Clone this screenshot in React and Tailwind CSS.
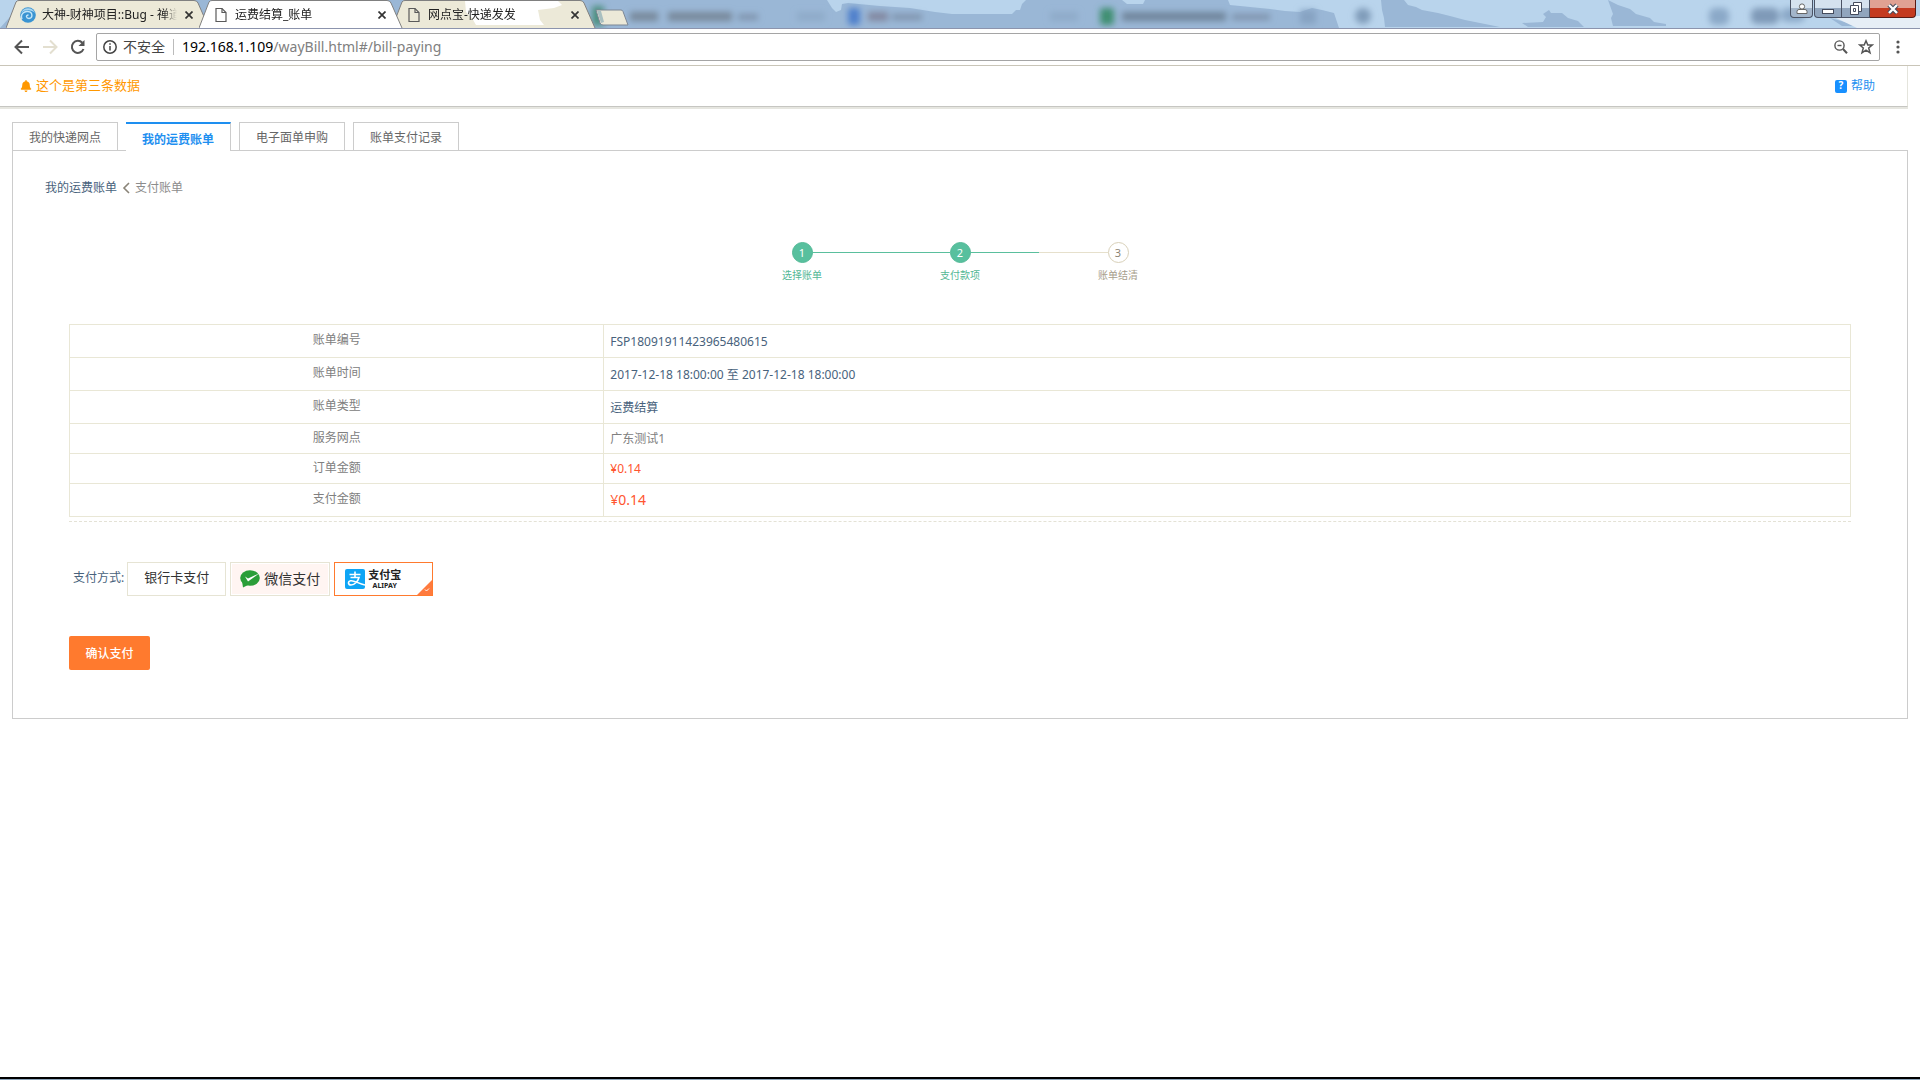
import { Fragment } from 'react'
import { FaBell } from 'react-icons/fa'

const browserTabs = [
    { title: '大神-财神项目::Bug - 禅道', icon: 'globe', active: false },
    { title: '运费结算_账单', icon: 'file', active: true },
    { title: '网点宝-快递发发', icon: 'file', active: false, glare: true },
]

const pageTabs = ['我的快递网点', '我的运费账单', '电子面单申购', '账单支付记录']

const steps = [
    { label: '选择账单', done: true },
    { label: '支付款项', done: true },
    { label: '账单结清', done: false },
]

const rows = [
    { label: '账单编号', value: 'FSP18091911423965480615', tone: 'text-[#48627c] pt-0.5', height: 'h-[33px]' },
    { label: '账单时间', value: '2017-12-18 18:00:00 至 2017-12-18 18:00:00', tone: 'text-[#48627c] pt-0.5', height: 'h-[33px]' },
    { label: '账单类型', value: '运费结算', tone: 'text-[#48627c] pt-0.5', height: 'h-[33px]' },
    { label: '服务网点', value: '广东测试1', tone: 'text-[#808080]', height: 'h-[30px]' },
    { label: '订单金额', value: '¥0.14', tone: 'text-[#ff5530]', height: 'h-[30px]' },
    { label: '支付金额', value: '¥0.14', tone: 'text-[#ff5530] text-sm', height: 'h-[33px]' },
]

function TabIcon({ type }) {
    if (type === 'globe') {
        return (
            <svg width="16" height="16" viewBox="0 0 16 16" className="shrink-0">
                <circle cx="8" cy="8" r="7.8" fill="#3a94d2" />
                <path d="M1 6A7.5 7.5 0 0 1 15 6C12 3 5 2 1 6Z" fill="#a9d6f0" />
                <path d="M2 12C0 7 4 4 8 4.5C13 5 13 11 9 11.5C6 11.5 5.5 8 8.5 8" fill="none" stroke="#c4e6f8" strokeWidth="1.4" />
            </svg>
        )
    }
    return (
        <svg width="16" height="16" viewBox="0 0 16 16" className="shrink-0" fill="none" stroke="#5a5a5a" strokeWidth="1.2">
            <path d="M3 1.5H9L13 5.5V14.5H3Z" />
            <path d="M9 1.5V5.5H13" />
        </svg>
    )
}

function Backdrop() {
    return (
        <svg className="absolute inset-0 h-full w-full" viewBox="0 0 1920 28" preserveAspectRatio="none">
            <defs>
                <filter id="soft" x="-20%" y="-50%" width="140%" height="200%">
                    <feGaussianBlur stdDeviation="3" />
                </filter>
            </defs>
            <rect width="1920" height="28" fill="#b9d4ec" />
            <path d="M18 0H827L832 8L836 12L841 10L842 4L848 3L880 6L910 8L935 12L952 14H1012L1016 10H1020L1022 4L1026 0H1122L1127 4H1143L1145 0H1228L1230 5L1250 7L1270 9L1285 11L1300 12L1312 8L1322 10L1334 13L1339 28H0L18 8Z" fill="#9ab7d6" />
            <path d="M1381 0H1404L1408 5L1416 7L1422 10L1438 13L1450 16L1465 20L1480 23L1500 27H1385L1384 18L1382 10Z" fill="#9ab7d6" />
            <path d="M1522 23L1543 22L1546 17L1543 14L1549 10L1551 13L1562 13L1568 18L1578 21L1584 27H1528Z" fill="#9ab7d6" />
            <path d="M1608 0L1618 5L1630 9L1636 14L1650 18L1654 22L1666 24V26H1613L1611 18L1613 14Z" fill="#9ab7d6" />
            <path d="M1830 18L1845 22L1856 26H1842Z" fill="#9ab7d6" />
            <path d="M1857 28L1836 18L1920 16V28Z" fill="#e6eef6" />
            <g filter="url(#soft)">
                <rect x="592" y="6" width="12" height="20" fill="#4d9080" />
                <rect x="630" y="12" width="28" height="9" fill="#78899b" />
                <rect x="668" y="12" width="64" height="9" fill="#78899b" />
                <rect x="738" y="14" width="20" height="6" fill="#7e93ac" />
                <rect x="848" y="8" width="12" height="17" rx="3" fill="#4f80cc" />
                <rect x="868" y="12" width="20" height="9" fill="#8288a0" />
                <rect x="892" y="14" width="30" height="6" fill="#7e93ac" />
                <rect x="1100" y="8" width="14" height="17" rx="3" fill="#3f8f72" />
                <rect x="1122" y="12" width="104" height="9" fill="#71869c" />
                <rect x="1232" y="14" width="38" height="6" fill="#7e93ac" />
                <rect x="797" y="12" width="28" height="9" fill="#8fabc9" />
                <rect x="1050" y="12" width="28" height="9" fill="#8fabc9" />
                <rect x="1300" y="10" width="16" height="14" fill="#86a3c2" />
                <circle cx="1363" cy="16" r="8" fill="#809cba" />
                <rect x="1709" y="8" width="20" height="17" rx="6" fill="#8ba9c8" />
                <rect x="1751" y="8" width="28" height="16" rx="6" fill="#7f9ab8" />
                <rect x="1781" y="8" width="24" height="14" rx="6" fill="#8ba9c8" />
            </g>
        </svg>
    )
}

function BrowserTab({ tab }) {
    const fill = tab.active ? '#ffffff' : '#ece9d8'
    return (
        <div className={`relative -mr-3 h-7 w-[205px] ${tab.active ? 'z-10' : ''}`}>
            <svg className="absolute inset-0 h-full w-full" viewBox="0 0 205 28" preserveAspectRatio="none">
                <path d="M0 28L10 2Q11 0.5 13 0.5H188Q191 0.5 192 3L203 28" fill={fill} stroke="#808080" />
                {tab.glare && <path d="M73 1H166L170 5L162 8L146 10L148 20L152 25H84L80 18L74 12Z" fill="#fff" />}
            </svg>
            <div className="relative flex h-full items-center pt-0.5 pr-[18px] pl-3.5 text-xs text-[#222]">
                <TabIcon type={tab.icon} />
                <span className="ml-1.5 flex-1 overflow-hidden mask-r-from-90% whitespace-nowrap">{tab.title}</span>
                <button aria-label="关闭标签页" className="ml-2">
                    <svg width="8" height="8" viewBox="0 0 8 8" stroke="#333" strokeWidth="1.7">
                        <path d="M0.5 0.5L7.5 7.5M7.5 0.5L0.5 7.5" />
                    </svg>
                </button>
            </div>
        </div>
    )
}

function WindowControls() {
    return (
        <div className="relative flex h-[18px] pr-1">
            <button aria-label="用户" className="mr-px flex h-full w-[23px] items-center justify-center rounded-b border border-t-0 border-[#4b5365] bg-linear-to-b from-[#d5e2ef] from-50% to-[#a3b5ca] to-50%">
                <svg width="12" height="12" viewBox="0 0 12 12" fill="#fff" stroke="#666" strokeWidth="1">
                    <path d="M1 10.5V8.5Q1 6.5 3 6.5H9Q11 6.5 11 8.5V10.5Z" />
                    <circle cx="6" cy="3.5" r="2.6" />
                </svg>
            </button>
            <button aria-label="最小化" className="flex h-full w-7 items-center justify-center rounded-bl border border-t-0 border-[#4b5365] bg-linear-to-b from-[#d5e2ef] from-50% to-[#91a5bd] to-50%">
                <svg width="14" height="12" viewBox="0 0 14 12"><rect x="1.5" y="6.5" width="11" height="4" fill="#fff" stroke="#444b5c" /></svg>
            </button>
            <button aria-label="还原" className="flex h-full w-7 items-center justify-center border border-t-0 border-l-0 border-[#4b5365] bg-linear-to-b from-[#d5e2ef] from-50% to-[#91a5bd] to-50%">
                <svg width="14" height="13" viewBox="0 0 14 13" fill="#fff" stroke="#444b5c">
                    <path d="M4.5 0.5H12.5V9.5H4.5Z" />
                    <path d="M1.5 3.5H9.5V12.5H1.5Z" />
                    <path d="M4.5 6.5H6.5V9.5H4.5Z" />
                </svg>
            </button>
            <button aria-label="关闭" className="flex h-full w-[46px] items-center justify-center rounded-br border border-t-0 border-l-0 border-[#5a1a14] bg-linear-to-b from-[#e0a193] from-50% to-[#c43a20] to-50%">
                <svg width="14" height="12" viewBox="0 0 14 12">
                    <path d="M3 2L11 10M11 2L3 10" stroke="#444b5c" strokeWidth="4.5" />
                    <path d="M3 2L11 10M11 2L3 10" stroke="#fff" strokeWidth="2.4" />
                </svg>
            </button>
        </div>
    )
}

function Browser() {
    return (
        <div className="font-['Noto_Sans','Noto_Sans_CJK_SC',sans-serif]">
            <div className="relative flex h-[29px] items-start justify-between overflow-hidden border-b border-[#8c94ad]">
                <Backdrop />
                <div className="relative flex pl-1.5">
                    {browserTabs.map((tab) => <BrowserTab key={tab.title} tab={tab} />)}
                    <button aria-label="新标签页" className="mt-[7px] ml-2.5">
                        <svg width="34" height="17" viewBox="0 0 34 17">
                            <path d="M1 1H26Q27.5 1 28 2.5L33 16H8Q6 16 5 14Z" fill="#ece9d8" stroke="#7d8795" />
                            <path d="M2 2H6L9 13L6 14Z" fill="#a9bfc0" />
                        </svg>
                    </button>
                </div>
                <WindowControls />
            </div>
            <div className="flex h-[37px] items-center border-b border-[#c9c5b8] bg-white pl-3.5">
                <button aria-label="后退">
                    <svg width="16" height="16" viewBox="0 0 16 16" fill="none" stroke="#555" strokeWidth="2"><path d="M15 8H2M8 1.5L1.5 8L8 14.5" /></svg>
                </button>
                <button aria-label="前进" className="ml-3">
                    <svg width="16" height="16" viewBox="0 0 16 16" fill="none" stroke="#e3dfd0" strokeWidth="2"><path d="M1 8H14M8 1.5L14.5 8L8 14.5" /></svg>
                </button>
                <button aria-label="重新加载" className="ml-3">
                    <svg width="16" height="16" viewBox="0 0 16 16" fill="none" stroke="#555" strokeWidth="2">
                        <path d="M13.5 10A6 6 0 1 1 12.3 3.8" />
                        <path d="M14.5 1V7H8.5Z" fill="#555" stroke="none" />
                    </svg>
                </button>
                <div className="ml-2.5 flex h-7 flex-1 items-center rounded-xs border border-[#a5a5a5] pl-1.5 text-sm">
                    <svg width="14" height="14" viewBox="0 0 14 14" fill="none" stroke="#444" strokeWidth="1.5">
                        <circle cx="7" cy="7" r="6.2" />
                        <path d="M7 6V10.5M7 3.2V4.8" />
                    </svg>
                    <span className="ml-1.5 text-[#444]">不安全</span>
                    <span className="mx-2 h-4 w-px bg-[#bbb]" />
                    <span className="flex-1 text-[#808080]"><span className="text-black">192.168.1.109</span>/wayBill.html#/bill-paying</span>
                    <button aria-label="缩放">
                        <svg width="14" height="14" viewBox="0 0 14 14" fill="none" stroke="#555" strokeWidth="1.4">
                            <circle cx="5.5" cy="5.5" r="4.6" />
                            <path d="M3.5 5.5H7.5" />
                            <path d="M9 9L13 13.2" strokeWidth="2" />
                        </svg>
                    </button>
                    <button aria-label="收藏" className="mr-[5px] ml-2.5">
                        <svg width="16" height="16" viewBox="0 0 16 16" fill="none" stroke="#555" strokeWidth="1.5">
                            <path d="M8 1.8L9.8 6H14.3L10.7 9L12 13.8L8 11.2L4 13.8L5.3 9L1.7 6H6.2Z" />
                        </svg>
                    </button>
                </div>
                <button aria-label="菜单" className="mr-[18px] ml-3.5">
                    <svg width="8" height="14" viewBox="0 0 8 14" fill="#555">
                        <circle cx="4" cy="2" r="1.6" /><circle cx="4" cy="7" r="1.6" /><circle cx="4" cy="12" r="1.6" />
                    </svg>
                </button>
            </div>
        </div>
    )
}

function Notice() {
    return (
        <header className="mr-3 flex h-[41px] items-center justify-between border-r border-b border-r-[#e4e4dc] border-b-[#c6c6c2] pr-8 pl-5 shadow-[0_2px_0_#e6e6e0]">
            <div className="flex items-center gap-1 text-[13px] text-[#ff9800]">
                <FaBell className="size-3" />
                <span>这个是第三条数据</span>
            </div>
            <a href="#help" className="flex items-center gap-1 text-xs text-[#1e8ff0]">
                <span className="flex h-[13px] w-3 items-center justify-center rounded-xs bg-[#1890ff] text-[10px] font-bold text-white">?</span>
                帮助
            </a>
        </header>
    )
}

function Stepper() {
    return (
        <div className="mt-[46px] flex items-start justify-center">
            {steps.map((step, i) => (
                <Fragment key={step.label}>
                    {i > 0 && (
                        <div className="-mx-2.5 mt-2.5 flex w-[138px]">
                            <div className={`h-px bg-[#5abf9d] ${step.done ? 'w-full' : 'w-1/2'}`} />
                            <div className="h-px flex-1 bg-[#e6e0cc]" />
                        </div>
                    )}
                    <div className={`flex w-10 flex-col items-center text-[10px] leading-4 ${step.done ? 'text-[#52b794]' : 'text-[#a89e8c]'}`}>
                        <span className={`flex size-[21px] items-center justify-center rounded-full border text-[11px] ${step.done ? 'border-[#55ba98] bg-[#58c09e] text-white' : 'border-[#d8d0b8] bg-white text-[#8c8474]'}`}>{i + 1}</span>
                        <span className="mt-1 whitespace-nowrap">{step.label}</span>
                    </div>
                </Fragment>
            ))}
        </div>
    )
}

function PayMethods() {
    return (
        <div className="mt-10 flex items-center pl-1">
            <span className="mr-[3px] pb-0.5 text-[#48627c]">支付方式:</span>
            <div className="flex gap-1 text-[#333]">
                <button className="h-[34px] w-[99px] border border-[#e6e4d4] pb-0.5 text-[13px]">银行卡支付</button>
                <button className="h-[34px] w-[100px] border border-[#e6e4d4] p-px">
                    <span className="flex h-full items-center justify-center gap-1 bg-[#fff5f2] text-sm">
                        <svg width="20" height="18" viewBox="0 0 20 18">
                            <ellipse cx="10" cy="8" rx="9.8" ry="7.8" fill="#2a9e38" />
                            <path d="M2 11L3 17.5L8 15Z" fill="#2a9e38" />
                            <path d="M5 6.5L8 8.5L19 3.5L8 11.5Z" fill="#fff" />
                        </svg>
                        微信支付
                    </span>
                </button>
                <button className="relative flex h-[34px] w-[99px] items-center gap-[3px] border border-[#ff7a2e] pl-2.5">
                    <svg width="20" height="20" viewBox="0 0 20 20">
                        <rect width="20" height="20" rx="2" fill="#0ea5f5" />
                        <path d="M4.5 5.5H15.5M10 2.5V8.5M5.5 8.5H14C13 12 10 16 6 16C3 16 2.5 12.5 5.5 11.8C9 11 13 14.5 20 16" fill="none" stroke="#fff" strokeWidth="1.6" />
                    </svg>
                    <span className="flex flex-col items-center text-[#222]">
                        <span className="text-[11px] leading-3 font-bold">支付宝</span>
                        <span className="text-[7px] leading-[9px] font-bold">ALIPAY</span>
                    </span>
                    <svg width="15" height="15" viewBox="0 0 15 15" className="absolute right-0 bottom-0">
                        <path d="M15 0V15H0Z" fill="#ff7a3e" />
                        <path d="M8 9.5L9.5 11L12 8.5" fill="none" stroke="#fff" strokeWidth="1" />
                    </svg>
                </button>
            </div>
        </div>
    )
}

export default function App() {
    return (
        <div className="flex min-h-screen flex-col bg-white">
            <Browser />
            <div className="flex-1 font-['Noto_Sans','Noto_Sans_CJK_SC',sans-serif] text-xs">
                <Notice />
                <nav className="mx-3 mt-[15px] flex gap-2">
                    {pageTabs.map((tab, i) => (
                        <a
                            key={tab}
                            href="#tab"
                            className={i === 1
                                ? 'relative z-10 -mb-px flex h-[29px] w-[105px] items-center justify-center border-t-2 border-r border-t-[#1e8ff0] border-r-[#ccc] bg-white pt-1 font-bold text-[#1e8ff0]'
                                : 'flex h-7 w-[106px] items-center justify-center border border-b-0 border-[#ccc] pt-0.5 text-[#666]'}
                        >
                            {tab}
                        </a>
                    ))}
                </nav>
                <main className="mx-3 border border-[#ccc] px-14 pb-12">
                    <div className="-ml-6 flex items-center gap-1 pt-[29px]">
                        <a href="#bill" className="text-[#48627c]">我的运费账单</a>
                        <svg width="8" height="12" viewBox="0 0 8 12" fill="none" stroke="#8a8478" strokeWidth="1.6" className="mx-px"><path d="M7 1L2 6L7 11" /></svg>
                        <span className="text-[#8c8c8c]">支付账单</span>
                    </div>
                    <Stepper />
                    <table className="mt-[41px] w-full table-fixed border-collapse">
                        <tbody>
                            {rows.map((row) => (
                                <tr key={row.label} className={row.height}>
                                    <th scope="row" className="w-[30%] border border-[#e9e7d6] pb-0.5 font-normal text-[#808080]">{row.label}</th>
                                    <td className={`border border-[#e9e7d6] pl-1.5 ${row.tone}`}>{row.value}</td>
                                </tr>
                            ))}
                        </tbody>
                    </table>
                    <div className="mt-1 border-b border-dashed border-[#e4e2d6]" />
                    <PayMethods />
                    <button className="mt-10 h-[34px] w-[81px] rounded-xs bg-[#ff7a2e] pt-0.5 font-medium text-white">确认支付</button>
                </main>
            </div>
            <div className="h-[3px] border-t-2 border-black bg-[#8ba3b8]" />
        </div>
    )
}
